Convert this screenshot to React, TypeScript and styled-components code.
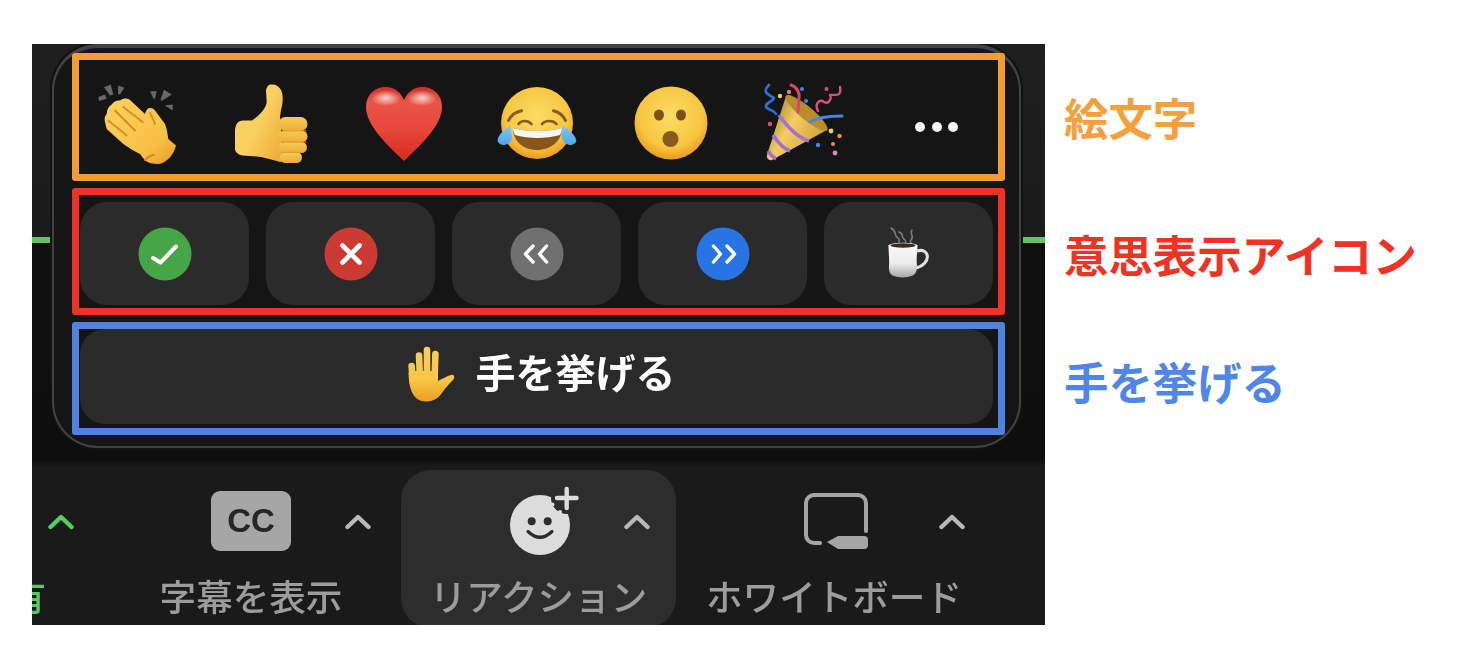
import React from "react";
import styled, { createGlobalStyle } from "styled-components";

const GlobalStyle = createGlobalStyle`
  html, body {
    margin: 0;
    padding: 0;
    background: #fff;
  }
  body {
    font-family: "Noto Sans CJK JP", "Noto Sans", sans-serif;
  }
`;

const Page = styled.div`
  display: flex;
  align-items: flex-start;
  width: 1470px;
  height: 650px;
  padding: 44px 0 0 32px;
  box-sizing: border-box;
  overflow: hidden;
`;

const Shot = styled.div`
  display: flex;
  flex-direction: column;
  width: 1013px;
  height: 581px;
  flex: none;
  overflow: hidden;
`;

const Stage = styled.div`
  height: 417px;
  flex: none;
  padding-left: 20px;
  box-sizing: border-box;
  overflow: hidden;
  background: linear-gradient(
    to bottom,
    #1f1f1f 0,
    #1b1b1b 193px,
    #63c463 193px,
    #63c463 199px,
    #101010 199px,
    #0e0e0e 100%
  );
`;

const Panel = styled.div`
  display: flex;
  flex-direction: column;
  gap: 7px;
  width: 969px;
  height: 404px;
  padding: 5px 14px 11px 18px;
  box-sizing: border-box;
  background: #151515;
  border: 2px solid #424242;
  border-top-width: 4px;
  border-radius: 46px;
  box-shadow: 0 0 0 2px #111;
`;

const Frame = styled.div<{ $color: string; $height: number }>`
  height: ${(p) => p.$height}px;
  flex: none;
  box-sizing: border-box;
  border: 7px solid ${(p) => p.$color};
  border-radius: 3px;
`;

const EmojiRow = styled.div`
  display: flex;
  align-items: center;
  justify-content: space-between;
  height: 100%;
  padding: 14px 21px 0 19px;
  box-sizing: border-box;
  svg {
    display: block;
    overflow: visible;
    filter: blur(0.5px);
  }
`;

const MoreSlot = styled.div`
  display: flex;
  justify-content: center;
  gap: 6.5px;
  width: 80px;
  padding-top: 6px;
`;

const Dot = styled.span`
  width: 10px;
  height: 10px;
  border-radius: 50%;
  background: #f4f4f4;
`;

const ChipRow = styled.div`
  display: grid;
  grid-template-columns: repeat(5, 169px);
  column-gap: 17px;
  padding: 7px 0 0 1px;
`;

const Chip = styled.div`
  display: flex;
  align-items: center;
  justify-content: center;
  height: 103px;
  background: #2b2b2b;
  border-radius: 27px;
  svg {
    display: block;
    filter: blur(0.3px);
  }
`;

const RaiseButton = styled.div`
  display: flex;
  align-items: center;
  justify-content: center;
  gap: 22px;
  height: 95px;
  margin: 0 5px 0 1px;
  padding: 0 0 6px 9px;
  box-sizing: border-box;
  background: #2a2a2a;
  border-radius: 25px;
  color: #fff;
  font-size: 40px;
  font-weight: 700;
  line-height: 1;
  svg {
    display: block;
    overflow: visible;
    filter: blur(0.5px);
  }
`;

const RaiseText = styled.span`
  margin-bottom: 6px;
  filter: blur(0.4px);
`;

const Toolbar = styled.div`
  display: flex;
  height: 164px;
  flex: none;
  padding-top: 9px;
  box-sizing: border-box;
  overflow: hidden;
  background: linear-gradient(to bottom, #0f0f0f 0, #1a1a1a 5px);
`;

const Tool = styled.div<{ $width: number; $left?: number; $active?: boolean }>`
  display: flex;
  flex-direction: column;
  align-items: center;
  width: ${(p) => p.$width}px;
  height: 158px;
  flex: none;
  margin-left: ${(p) => p.$left ?? 0}px;
  padding-top: 21px;
  box-sizing: border-box;
  border-radius: 30px;
  background: ${(p) => (p.$active ? "#2d2d2d" : "transparent")};
`;

const IconRow = styled.div<{ $pad: number; $gap: number }>`
  display: flex;
  align-items: center;
  align-self: stretch;
  gap: ${(p) => p.$gap}px;
  height: 60px;
  padding-left: ${(p) => p.$pad}px;
  svg {
    display: block;
    flex: none;
    overflow: visible;
    filter: blur(0.5px);
  }
`;

const CcBadge = styled.div`
  display: flex;
  align-items: center;
  justify-content: center;
  width: 80px;
  height: 60px;
  flex: none;
  background: #a6a6a6;
  border-radius: 9px;
  color: #262626;
  font-family: "Liberation Sans", Arial, sans-serif;
  font-size: 33px;
  font-weight: 700;
  filter: blur(0.4px);
`;

const ToolLabel = styled.div<{ $green?: boolean }>`
  margin-top: 23px;
  color: ${(p) => (p.$green ? "#55cc60" : "#9c9c9c")};
  font-size: 36.6px;
  font-weight: 500;
  line-height: 44px;
  white-space: nowrap;
  filter: blur(0.4px);
`;

const ClippedLabel = styled(ToolLabel)`
  display: flex;
  justify-content: flex-end;
  align-self: flex-start;
  width: 14px;
  overflow: hidden;
`;

const Notes = styled.div`
  display: flex;
  flex-direction: column;
  margin-left: 19px;
  padding-top: 51px;
`;

const Note = styled.div<{ $color: string; $top?: number }>`
  margin-top: ${(p) => p.$top ?? 0}px;
  color: ${(p) => p.$color};
  font-size: 44.4px;
  font-weight: 700;
  line-height: 44px;
  white-space: nowrap;
`;

const Chevron = ({ color = "#b9b9b9" }: { color?: string }) => (
  <svg width="26" height="15" viewBox="0 0 26 15">
    <path d="M2.5 13 L13 3 L23.5 13" fill="none" stroke={color} strokeWidth="4.4" strokeLinecap="round" strokeLinejoin="round" />
  </svg>
);

const ClapIcon = () => (
  <svg width="80" height="82" viewBox="0 0 80 82">
    <defs>
      <linearGradient id="clapFill" x1="0" y1="0" x2="1" y2="1">
        <stop offset="0" stopColor="#fbd25f" />
        <stop offset="0.7" stopColor="#f7c044" />
        <stop offset="1" stopColor="#e89a22" />
      </linearGradient>
    </defs>
    <g fill="#686868">
      <path d="M0.3 14 L7 11.5 L8.7 15.8 L1 18Z" />
      <path d="M6 4.2 L12.7 1.5 L15.3 11.5 L12 12.5Z" />
      <path d="M20.3 2.5 L26.3 4.8 L22 11.5 L20 11Z" />
      <path d="M52 8.2 L58.7 8.2 L57 15.8 L55.5 15.8Z" />
      <path d="M66 6.8 L73.7 11.5 L63.7 18 L62.5 16.5Z" />
      <path d="M67 22.5 L74.7 21.5 L74.7 27.5Z" />
    </g>
    <path d="M7 39 C6 35 7 33 8.7 31 C9 26 11 23 13.7 21.5 C16 18 19 17 22 17.5 C26 15 29 15 32 17 L47 31 C48 27 50 24.5 52 25 C54 24.5 56 26 57 27.5 L67 41 C69 46 69.5 51 70.3 56 L78 62.5 C77 67 74 73 70.3 76 C67 79 63 81 60.3 81 C55 81 50 80 47 77.5 L42 71 C36 68 31 65 25.3 61 L8.7 46Z" fill="url(#clapFill)" />
    <g fill="none" stroke="#cf8f26" strokeWidth="1.8" strokeLinecap="round">
      <path d="M10.3 37.5 L28.7 52.5" />
      <path d="M17 27.5 L37 47.5" />
      <path d="M25.3 24 L44.7 39.2" />
      <path d="M52 30 C54 34 56 38 57 41" />
      <path d="M47 77 C51 73 53 72 56 72" />
    </g>
  </svg>
);

const ThumbIcon = () => (
  <svg width="80" height="82" viewBox="-3 0 80 82">
    <defs>
      <linearGradient id="thumbFill" x1="0" y1="0" x2="1" y2="0.8">
        <stop offset="0" stopColor="#fbd468" />
        <stop offset="0.55" stopColor="#f9cf60" />
        <stop offset="1" stopColor="#efae38" />
      </linearGradient>
      <linearGradient id="knuckleFill" x1="0" y1="0" x2="0" y2="1">
        <stop offset="0" stopColor="#f9ca55" />
        <stop offset="1" stopColor="#eead38" />
      </linearGradient>
    </defs>
    <path d="M32 7.5 C33 2 36 1 37.7 1.5 C41 1 45 3 47 7 C49.5 12 49 20 47 27 L46 34 L50 78 L46 79 C38 77 30 74 22.7 73.5 L9.3 72.5 C4 72 1 69 1 65.8 L1 47.5 C1.5 41 4 37.5 9 37.5 L18 37.5 C25 33 32.5 25 32.7 19Z" fill="url(#thumbFill)" />
    <g fill="url(#knuckleFill)">
      <rect x="44.5" y="34" width="29" height="14" rx="7" />
      <rect x="44.5" y="47.5" width="29" height="12" rx="6" />
      <rect x="45" y="59" width="28" height="11" rx="5.5" />
      <rect x="46" y="69" width="22" height="11" rx="5.5" />
    </g>
    <g fill="none" stroke="#d8962c" strokeWidth="1.2" strokeLinecap="round" opacity="0.8">
      <path d="M48 47.8 H72" />
      <path d="M48 59.2 H72" />
      <path d="M48 69.4 H68" />
    </g>
  </svg>
);

const HeartIcon = () => (
  <svg width="80" height="82" viewBox="-2 0 80 82">
    <defs>
      <linearGradient id="heartFill" x1="0" y1="0" x2="0" y2="1">
        <stop offset="0" stopColor="#c92f26" />
        <stop offset="0.2" stopColor="#ea5548" />
        <stop offset="0.55" stopColor="#e8483b" />
        <stop offset="1" stopColor="#d72a1f" />
      </linearGradient>
      <radialGradient id="heartShine" cx="0.5" cy="0.5" r="0.5">
        <stop offset="0" stopColor="#fff" stopOpacity="0.75" />
        <stop offset="1" stopColor="#fff" stopOpacity="0" />
      </radialGradient>
    </defs>
    <path d="M38 78 C26 66 0 44 0 24 C0 11 9 4 20 4 C29 4 35 10 38 17 C41 10 47 4 56 4 C67 4 76 11 76 24 C76 44 50 66 38 78Z" fill="url(#heartFill)" />
    <ellipse cx="20" cy="15" rx="15" ry="8" fill="url(#heartShine)" />
    <ellipse cx="56" cy="15" rx="15" ry="8" fill="url(#heartShine)" />
  </svg>
);

const FaceGradient = ({ id }: { id: string }) => (
  <radialGradient id={id} cx="0.5" cy="0.4" r="0.62">
    <stop offset="0" stopColor="#fbdc66" />
    <stop offset="0.7" stopColor="#f8c640" />
    <stop offset="1" stopColor="#e8951e" />
  </radialGradient>
);

const LaughIcon = () => (
  <svg width="80" height="82" viewBox="-1 0 80 82">
    <defs>
      <FaceGradient id="laughFill" />
      <linearGradient id="tearFill" x1="0" y1="0" x2="0" y2="1">
        <stop offset="0" stopColor="#7fc8f5" />
        <stop offset="1" stopColor="#4da6ea" />
      </linearGradient>
    </defs>
    <circle cx="39" cy="40" r="36" fill="url(#laughFill)" />
    <g fill="none" stroke="#8a5a1c" strokeLinecap="round">
      <path d="M10.5 37.5 C13 32 17 29 23.5 27.7" strokeWidth="3" />
      <path d="M67.5 37.5 C65 32 61 29 55.5 27.7" strokeWidth="3" />
      <path d="M20.5 41 C23 37 30 37 33.5 41" strokeWidth="2.6" />
      <path d="M44 41 C47 37 55 37 58.5 41" strokeWidth="2.6" />
    </g>
    <path d="M15 45 C28 49 50 49 64 45 C64 58 53 67 39 67 C25 67 15 58 15 45Z" fill="#8a5618" />
    <path d="M15 45 C28 49 50 49 64 45 C64 48 63 50 62 52 C48 56 30 56 17 52 C16 50 15 48 15 45Z" fill="#f5f5f5" />
    <path d="M12 42.5 C13 48 14.5 52 13.5 56 C12 62 3 64.5 0 59 C-2 55 5 47 12 42.5Z" fill="url(#tearFill)" />
    <path d="M65 42.5 C64 48 63 52 64.5 56 C66 62 75 64.5 78 59 C80 55 72 47 65 42.5Z" fill="url(#tearFill)" />
  </svg>
);

const WowIcon = () => (
  <svg width="80" height="82" viewBox="0 0 80 82">
    <defs>
      <FaceGradient id="wowFill" />
    </defs>
    <circle cx="40" cy="40" r="36.5" fill="url(#wowFill)" />
    <ellipse cx="28" cy="32" rx="5" ry="5.5" fill="#7f5016" />
    <ellipse cx="50" cy="32" rx="5" ry="5.5" fill="#7f5016" />
    <circle cx="39.5" cy="56" r="8" fill="#8a5a1c" />
  </svg>
);

const PartyIcon = () => (
  <svg width="80" height="82" viewBox="0 0 80 82">
    <defs>
      <linearGradient id="coneFill" x1="0" y1="0.2" x2="1" y2="0.8">
        <stop offset="0" stopColor="#a07a22" />
        <stop offset="0.4" stopColor="#f2cd62" />
        <stop offset="1" stopColor="#c9992f" />
      </linearGradient>
    </defs>
    <path d="M22 13 L63 47 L8 77 C5 78 2 75 3 72Z" fill="url(#coneFill)" />
    <ellipse cx="42.5" cy="30" rx="27" ry="6.5" transform="rotate(40 42.5 30)" fill="#b98c2c" />
    <g fill="none" stroke="#a56fd6" strokeWidth="3.6">
      <path d="M15 32 C22 42 32 54 45 58" />
      <path d="M9 52 C13 58 18 65 26 68" />
      <path d="M4 68 C6 71 9 74 12 76" />
    </g>
    <g fill="none" strokeLinecap="round" strokeLinejoin="round">
      <path d="M5 2 C-1 8 1 10 10 15 C8 20 1 19 2 24 C4 27 10 27 12 31" stroke="#2e6fd8" strokeWidth="2.6" />
      <path d="M27 2 C33 4 36 10 35 15 L34 29" stroke="#dd4466" strokeWidth="3" />
      <path d="M54 28 C50 20 56 16 60 19 C66 22 68 13 66 12 C70 11 78 15 76 4" stroke="#e0507c" strokeWidth="2.4" />
      <path d="M46 39 C54 34 66 33 78 33" stroke="#3d8ae8" strokeWidth="3" />
    </g>
    <circle cx="16" cy="13" r="2.2" fill="#ecd552" />
    <circle cx="25" cy="9" r="2.2" fill="#d977a5" />
    <circle cx="38" cy="6" r="2" fill="#3d8ae8" />
    <circle cx="42" cy="18" r="2" fill="#3d8ae8" />
    <circle cx="6" cy="41" r="2.2" fill="#d4557a" />
    <circle cx="62.5" cy="6" r="2" fill="#d4557a" />
    <circle cx="67" cy="48" r="2.4" fill="#ecd552" />
    <circle cx="75.5" cy="53" r="2.2" fill="#e09a3c" />
    <circle cx="69" cy="61" r="2" fill="#e09a3c" />
    <circle cx="54" cy="62" r="2.2" fill="#3d8ae8" />
    <circle cx="71" cy="70" r="2.4" fill="#d58cc0" />
  </svg>
);

const CheckIcon = () => (
  <svg width="54" height="54" viewBox="0 0 54 54">
    <circle cx="27" cy="27" r="26.5" fill="#46a546" />
    <path d="M15 31 L22.5 35.5 L38 19.5" fill="none" stroke="#fff" strokeWidth="4" strokeLinecap="round" strokeLinejoin="round" />
  </svg>
);

const CrossIcon = () => (
  <svg width="54" height="54" viewBox="0 0 54 54">
    <circle cx="27" cy="27" r="26.5" fill="#cc3b33" />
    <path d="M18.5 18.5 L35.5 35.5 M35.5 18.5 L18.5 35.5" fill="none" stroke="#fff" strokeWidth="4.6" strokeLinecap="round" />
  </svg>
);

const SlowerIcon = () => (
  <svg width="54" height="54" viewBox="0 0 54 54">
    <circle cx="27" cy="27" r="26.5" fill="#707070" />
    <path d="M23 19 L15.5 27 L23 35 M36.5 19 L29.5 27 L36.5 35" fill="none" stroke="#fff" strokeWidth="3.4" strokeLinecap="round" strokeLinejoin="round" />
  </svg>
);

const FasterIcon = () => (
  <svg width="54" height="54" viewBox="0 0 54 54">
    <circle cx="27" cy="27" r="26.5" fill="#2874e4" />
    <path d="M17.5 19 L24.5 27 L17.5 35 M31 19 L38.5 27 L31 35" fill="none" stroke="#fff" strokeWidth="3.4" strokeLinecap="round" strokeLinejoin="round" />
  </svg>
);

const CoffeeIcon = () => (
  <svg width="48" height="54" viewBox="0 0 48 54">
    <defs>
      <linearGradient id="mugFill" x1="0" y1="0" x2="0" y2="1">
        <stop offset="0" stopColor="#fbfbfb" />
        <stop offset="0.6" stopColor="#ececec" />
        <stop offset="1" stopColor="#a5a5a5" />
      </linearGradient>
    </defs>
    <g fill="none" stroke="#7d7d7d" strokeWidth="1.5" strokeLinecap="round">
      <path d="M6 1 C13 5 8 8 13 11 C16 13 13 15 14 17" />
      <path d="M14 5 C20 7 15 10 20 13 C22 15 20 16 20 17" />
      <path d="M27 3 C24 7 30 9 26 13 C24 15 27 16 26 17" />
    </g>
    <path d="M32 24 C45 20 47 37 31 41" fill="none" stroke="#e0e0e0" strokeWidth="3" />
    <path d="M3.5 18 C10 15 26 15 32.5 18 C32.5 26 31 30 32 39 C32 47 29 50 18 50.5 C7 50 3.5 48 4 39 C4.5 31 3.5 26 3.5 18Z" fill="url(#mugFill)" />
    <ellipse cx="18" cy="18.5" rx="12.5" ry="2.2" fill="#3a2a22" />
  </svg>
);

const HandIcon = () => (
  <svg width="47" height="54" viewBox="0 0 47 54">
    <defs>
      <linearGradient id="handFill" gradientUnits="userSpaceOnUse" x1="0" y1="0" x2="0" y2="55">
        <stop offset="0" stopColor="#f9cf5c" />
        <stop offset="0.6" stopColor="#f8c545" />
        <stop offset="1" stopColor="#ec9c20" />
      </linearGradient>
    </defs>
    <path d="M1.5 26 C2 42 6 54.5 19 54.5 C28 54.5 32 50 35 46 C38 41 42 37 46 33 C48.5 30 47 27 44 28 C40 29 35 32 31 34 L31 24 L3 24Z" fill="url(#handFill)" />
    <g fill="none" stroke="url(#handFill)" strokeWidth="6.6" strokeLinecap="round">
      <path d="M4.6 19 L6 36" />
      <path d="M12 8.5 L13 32" />
      <path d="M20 3 L20 32" />
      <path d="M28.4 7 L27.5 34" />
    </g>
  </svg>
);

const ReactionIcon = () => (
  <svg width="77" height="70" viewBox="505 481 77 70">
    <circle cx="540" cy="520" r="30" fill="#dcdcdc" />
    <circle cx="567" cy="493" r="16" fill="#2d2d2d" />
    <circle cx="552.5" cy="499.5" r="2" fill="#dcdcdc" />
    <circle cx="560" cy="507" r="2" fill="#dcdcdc" />
    <path d="M566.7 484 V503 M557 493 H576.5" fill="none" stroke="#dcdcdc" strokeWidth="4.4" strokeLinecap="round" />
    <circle cx="531.7" cy="516.3" r="4" fill="#2d2d2d" />
    <circle cx="547.7" cy="516.3" r="4" fill="#2d2d2d" />
    <path d="M528 526.5 Q540 538 552 526.5" fill="none" stroke="#2d2d2d" strokeWidth="3.2" strokeLinecap="round" />
  </svg>
);

const WhiteboardIcon = () => (
  <svg width="64" height="56" viewBox="0 0 64 56">
    <path d="M16 50 H10 a8 8 0 0 1 -8 -8 V10 a8 8 0 0 1 8 -8 H54 a8 8 0 0 1 8 8 V38" fill="none" stroke="#a5a5a5" strokeWidth="4" strokeLinecap="round" />
    <path d="M23 49 L34 43 H60 a4 4 0 0 1 4 4 V52 a4 4 0 0 1 -4 4 H34Z" fill="#a5a5a5" />
  </svg>
);

export default function App() {
  return (
    <>
      <GlobalStyle />
      <Page>
        <Shot>
          <Stage>
            <Panel>
              <Frame $color="#f39c36" $height={128}>
                <EmojiRow>
                  <ClapIcon />
                  <ThumbIcon />
                  <HeartIcon />
                  <LaughIcon />
                  <WowIcon />
                  <PartyIcon />
                  <MoreSlot>
                    <Dot />
                    <Dot />
                    <Dot />
                  </MoreSlot>
                </EmojiRow>
              </Frame>
              <Frame $color="#ee3324" $height={127}>
                <ChipRow>
                  <Chip><CheckIcon /></Chip>
                  <Chip><CrossIcon /></Chip>
                  <Chip><SlowerIcon /></Chip>
                  <Chip><FasterIcon /></Chip>
                  <Chip><CoffeeIcon /></Chip>
                </ChipRow>
              </Frame>
              <Frame $color="#5083e0" $height={113}>
                <RaiseButton>
                  <HandIcon />
                  <RaiseText>手を挙げる</RaiseText>
                </RaiseButton>
              </Frame>
            </Panel>
          </Stage>
          <Toolbar>
            <Tool $width={50}>
              <IconRow $pad={16} $gap={0}>
                <Chevron color="#4fd25c" />
              </IconRow>
              <ClippedLabel $green>有</ClippedLabel>
            </Tool>
            <Tool $width={242} $left={48}>
              <IconRow $pad={81} $gap={54}>
                <CcBadge>CC</CcBadge>
                <Chevron />
              </IconRow>
              <ToolLabel>字幕を表示</ToolLabel>
            </Tool>
            <Tool $width={275} $left={29} $active>
              <IconRow $pad={104} $gap={42}>
                <ReactionIcon />
                <Chevron />
              </IconRow>
              <ToolLabel>リアクション</ToolLabel>
            </Tool>
            <Tool $width={282} $left={17}>
              <IconRow $pad={111} $gap={71}>
                <WhiteboardIcon />
                <Chevron />
              </IconRow>
              <ToolLabel>ホワイトボード</ToolLabel>
            </Tool>
          </Toolbar>
        </Shot>
        <Notes>
          <Note $color="#f5a03c">絵文字</Note>
          <Note $color="#ee3324" $top={93}>意思表示アイコン</Note>
          <Note $color="#4f86e8" $top={83}>手を挙げる</Note>
        </Notes>
      </Page>
    </>
  );
}
